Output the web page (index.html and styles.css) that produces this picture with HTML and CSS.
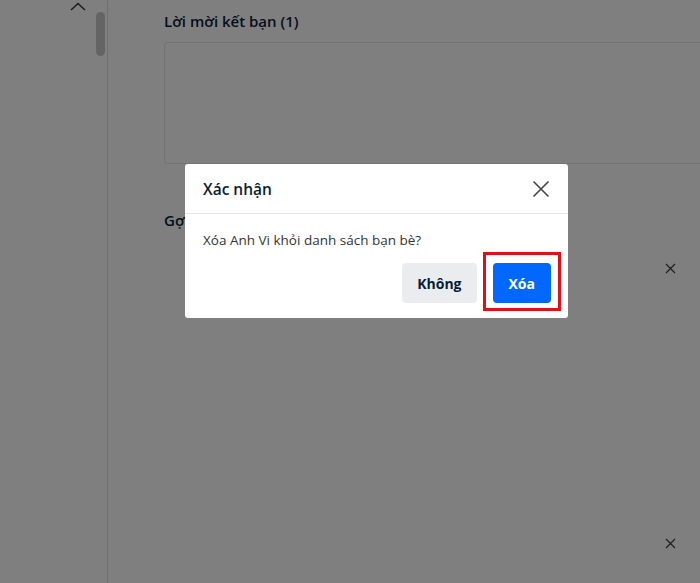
FILE: index.html
```html
<!DOCTYPE html>
<html lang="vi">

<head>
    <meta charset="UTF-8">
    <meta name="viewport" content="width=device-width, initial-scale=1.0">
    <title>Danh sách bạn bè</title>
    <link rel="stylesheet" href="styles.css">
</head>

<body>
    <div class="page">
        <div class="sidebar">
            <div class="chevron">
                <svg width="16" height="9" viewBox="0 0 16 9">
                    <path d="M1 8 L8 1.5 L15 8" fill="none" stroke="#333" stroke-width="1.4" />
                </svg>
            </div>
            <div class="scroll-track">
                <div class="scroll-thumb"></div>
            </div>
        </div>

        <div class="main">
            <div class="section-title">Lời mời kết bạn (1)</div>
            <div class="request-box"></div>

            <div class="section-title suggest-title">Gợi ý kết bạn</div>
            <div class="suggest-list">
                <div class="suggest-card">
                    <svg class="card-close" width="11" height="11" viewBox="0 0 11 11">
                        <path d="M1 1 L10 10 M10 1 L1 10" stroke="#3a3a3a" stroke-width="1.2" />
                    </svg>
                </div>
                <div class="suggest-card">
                    <svg class="card-close" width="11" height="11" viewBox="0 0 11 11">
                        <path d="M1 1 L10 10 M10 1 L1 10" stroke="#3a3a3a" stroke-width="1.2" />
                    </svg>
                </div>
            </div>
        </div>
    </div>

    <div class="overlay"></div>

    <div class="modal">
        <div class="modal-header">
            <span class="modal-title">Xác nhận</span>
            <svg class="modal-close" width="18" height="18" viewBox="0 0 18 18">
                <path d="M1.5 1.5 L16.5 16.5 M16.5 1.5 L1.5 16.5" stroke="#444" stroke-width="1.6" />
            </svg>
        </div>
        <div class="modal-body">
            <p class="modal-text">Xóa Anh Vi khỏi danh sách bạn bè?</p>
            <div class="modal-actions">
                <button class="btn btn-secondary">Không</button>
                <div class="highlight-wrap">
                    <button class="btn btn-primary">Xóa</button>
                    <span class="highlight"></span>
                </div>
            </div>
        </div>
    </div>
</body>

</html>
```

FILE: styles.css
```css
* {
    box-sizing: border-box;
}

body {
    font-family: "Open Sans", "Noto Sans", Arial, sans-serif;
    background-color: #fff;
    color: #081c36;
    margin: 0;
    height: 583px;
    overflow: hidden;
}

.page {
    display: flex;
    height: 100%;
}

.sidebar {
    width: 108px;
    flex-shrink: 0;
    display: flex;
    justify-content: flex-end;
    gap: 10px;
    padding-right: 2px;
    border-right: 1px solid #e1e1e1;
}

.chevron svg {
    display: block;
    margin-top: 2px;
}

.scroll-track {
    width: 9px;
    padding-top: 12px;
}

.scroll-thumb {
    height: 44px;
    border-radius: 5px;
    background-color: #c9c9c9;
}

.main {
    flex: 1;
    padding: 11px 0 0 56px;
    overflow: hidden;
}

.section-title {
    font-size: 15px;
    font-weight: 600;
    line-height: 20px;
    white-space: nowrap;
}

.request-box {
    margin-top: 11px;
    margin-right: -10px;
    height: 122px;
    border: 1px solid #e4e6eb;
    border-radius: 3px;
}

.suggest-title {
    margin-top: 46px;
}

.suggest-list {
    display: flex;
    flex-direction: column;
    gap: 12px;
    margin-top: 18px;
    padding-right: 24px;
}

.suggest-card {
    position: relative;
    height: 263px;
    border-radius: 6px;
}

.card-close {
    position: absolute;
    top: 15px;
    right: 0;
}

.overlay {
    position: fixed;
    inset: 0;
    background-color: rgba(0, 0, 0, 0.5);
}

.modal {
    position: fixed;
    left: 185px;
    top: 164px;
    width: 383px;
    background-color: #fff;
    border-radius: 3px;
}

.modal-header {
    display: flex;
    justify-content: space-between;
    align-items: center;
    height: 50px;
    padding: 0 18px;
    border-bottom: 1px solid #e4e6eb;
}

.modal-title {
    font-size: 15.5px;
    font-weight: 600;
    color: #081c36;
}

.modal-body {
    padding: 16px 17px 15px 18px;
}

.modal-text {
    margin: 0;
    font-size: 13.5px;
    line-height: 20px;
    color: #333;
}

.modal-actions {
    display: flex;
    justify-content: flex-end;
    gap: 16px;
    margin-top: 13px;
}

.btn {
    height: 40px;
    padding: 0 15px;
    border: none;
    border-radius: 4px;
    font-family: inherit;
    font-size: 14px;
    font-weight: 700;
    cursor: pointer;
}

.btn-secondary {
    background-color: #eaedf0;
    color: #081c36;
}

.btn-primary {
    padding: 0 16px;
    background-color: #0068ff;
    color: #fff;
}

.highlight-wrap {
    position: relative;
}

.highlight {
    position: absolute;
    top: -11px;
    bottom: -8px;
    left: -10px;
    right: -10px;
    border: 3px solid #e0101a;
}
```
